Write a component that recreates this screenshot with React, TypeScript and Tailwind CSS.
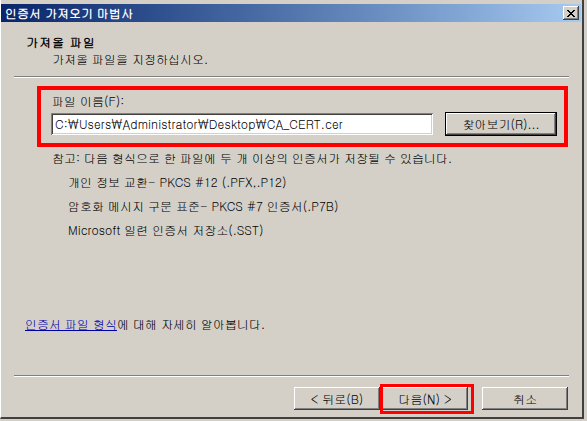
const font = "font-['Gulim','Noto_Sans_CJK_KR',sans-serif]";

const raised =
  "shadow-[inset_-1px_-1px_#404040,inset_1px_1px_#ffffff,inset_-2px_-2px_#808080,inset_2px_2px_#d4d0c8]";
const sunken =
  "shadow-[inset_1px_1px_#808080,inset_-1px_-1px_#ffffff,inset_2px_2px_#404040,inset_-2px_-2px_#d4d0c8]";

function WinButton({ label, className = "" }: { label: string; className?: string }) {
  return (
    <div
      className={`w-[86px] h-[23px] bg-[#d4d0c8] flex items-center justify-center text-[12px] leading-4 text-black ${raised} ${className}`}
    >
      {label}
    </div>
  );
}

function Separator() {
  return <div className="ml-[13px] w-[555px] h-[2px] border-t border-t-[#808080] border-b border-b-white" />;
}

export default function App() {
  return (
    <div className={`w-[587px] h-[421px] bg-[#d4d0c8] overflow-hidden ${font}`}>
      <div className="w-[584px] h-[419px] bg-[#d4d0c8] border-l border-l-white border-r-2 border-r-[#404040] border-b-2 border-b-[#404040] pt-[4px] flex flex-col">
        {/* title bar */}
        <div className="h-[18px] mr-[1px] flex items-center justify-between bg-gradient-to-r from-[#0a246a] to-[#a6caf0]">
          <span className="pl-[4px] text-[12px] leading-4 font-bold text-white">인증서 가져오기 마법사</span>
          <div className={`w-[16px] h-[14px] mr-[2px] bg-[#d4d0c8] flex items-center justify-center ${raised}`}>
            <svg width="8" height="7" viewBox="0 0 8 7" shapeRendering="crispEdges">
              <path d="M0 0h2v1H0zM6 0h2v1H6zM1 1h2v1H1zM5 1h2v1H5zM2 2h4v1H2zM3 3h2v1H3zM2 4h4v1H2zM1 5h2v1H1zM5 5h2v1H5zM0 6h2v1H0zM6 6h2v1H6z" fill="#000" />
            </svg>
          </div>
        </div>

        {/* header */}
        <div className="pt-[12px] pl-[25px] text-[12px] leading-4 font-bold tracking-[1px] text-black">가져올 파일</div>
        <div className="mt-[1px] pl-[51px] text-[12px] leading-4 text-black">가져올 파일을 지정하십시오.</div>
        <div className="mt-[9px]">
          <Separator />
        </div>

        {/* file name box */}
        <div className="mt-[8px] ml-[36px] w-[531px] border-4 border-[#ff0000] pt-[3px] pb-[7px] pl-[10px] pr-[6px]">
          <div className="ml-[1px] text-[12px] leading-4 text-black">파일 이름(F):</div>
          <div className="mt-[3px] flex items-center gap-[12px]">
            <div className={`w-[382px] h-[22px] bg-white flex items-center pl-[4px] text-[12px] leading-4 tracking-[0.1px] text-black ${sunken}`}>
              C:₩Users₩Administrator₩Desktop₩CA_CERT.cer
            </div>
            <div className="w-[112px] h-[24px] border border-black">
              <div className={`w-full h-full flex items-center justify-center text-[12px] leading-4 text-black ${raised}`}>
                찾아보기(R)...
              </div>
            </div>
          </div>
        </div>

        {/* formats */}
        <div className="mt-[3px] pl-[51px] text-[12px] leading-4 text-black">
          참고: 다음 형식으로 한 파일에 두 개 이상의 인증서가 저장될 수 있습니다.
        </div>
        <div className="pl-[67px] text-[12px] leading-4 text-black flex flex-col gap-[8px] mt-[8px]">
          <div>개인 정보 교환- PKCS #12 (.PFX,.P12)</div>
          <div>암호화 메시지 구문 표준- PKCS #7 인증서(.P7B)</div>
          <div>Microsoft 일련 인증서 저장소(.SST)</div>
        </div>

        <div className="mt-[78px] pl-[24px] text-[12px] leading-4 text-black">
          <span className="text-[#0000a8] underline">인증서 파일 형식</span>에 대해 자세히 알아봅니다.
        </div>

        <div className="mt-[43px]">
          <Separator />
        </div>

        {/* buttons */}
        <div className="mt-[10px] pl-[293px] flex">
          <WinButton label="< 뒤로(B)" />
          <div className="relative ml-[2px]">
            <WinButton label="다음(N) >" />
            <div className="absolute -left-[2px] -top-[3px] -right-[6px] -bottom-[4px] border-[3px] border-[#ff0000]" />
          </div>
          <WinButton label="취소" className="ml-[14px]" />
        </div>
      </div>
    </div>
  );
}
